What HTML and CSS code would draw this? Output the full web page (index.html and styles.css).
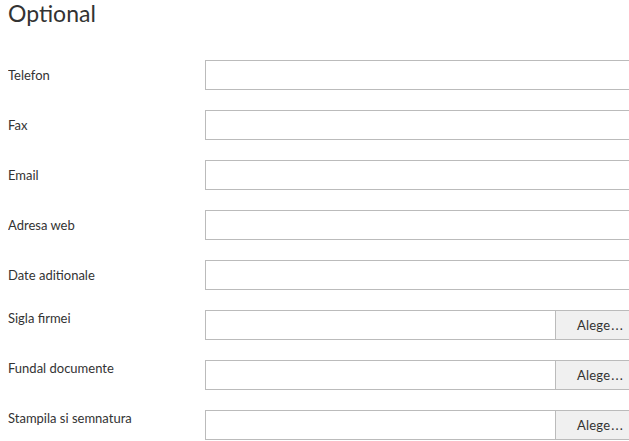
FILE: index.html
```html
<!DOCTYPE html>
<html lang="ro">
<head>
  <meta charset="UTF-8">
  <title>Optional</title>
  <link rel="stylesheet" href="styles.css">
</head>
<body>
  <h2>Optional</h2>
  <div class="form">
    <div class="row">
      <label>Telefon</label>
      <input type="text">
    </div>
    <div class="row">
      <label>Fax</label>
      <input type="text">
    </div>
    <div class="row">
      <label>Email</label>
      <input type="text">
    </div>
    <div class="row">
      <label>Adresa web</label>
      <input type="text">
    </div>
    <div class="row">
      <label>Date aditionale</label>
      <input type="text">
    </div>
    <div class="row file">
      <label>Sigla firmei</label>
      <div class="picker"><input type="text"><button>Alege<span class="dots">...</span></button></div>
    </div>
    <div class="row file">
      <label>Fundal documente</label>
      <div class="picker"><input type="text"><button>Alege<span class="dots">...</span></button></div>
    </div>
    <div class="row file">
      <label>Stampila si semnatura</label>
      <div class="picker"><input type="text"><button>Alege<span class="dots">...</span></button></div>
    </div>
  </div>
</body>
</html>
```

FILE: styles.css
```css
html, body {
  overflow: hidden;
}
body {
  margin: 0;
  padding: 0 0 0 8px;
  font-family: Lato, "Open Sans", sans-serif;
  color: #333;
  background: #fff;
}
h2 {
  margin: 0;
  height: 60px;
  font-size: 23px;
  font-weight: 400;
  line-height: 26px;
}
.row {
  display: flex;
  align-items: center;
  height: 30px;
  margin-bottom: 20px;
  overflow: hidden;
}
label {
  width: 197px;
  flex: none;
  font-size: 13px;
  line-height: 16px;
}
.row.file label {
  align-self: flex-start;
}
input {
  box-sizing: border-box;
  flex: none;
  width: 500px;
  height: 30px;
  margin: 0;
  border: 1px solid #bbb;
  border-radius: 0;
  background: #fff;
  font-family: inherit;
}
.picker {
  display: flex;
  flex: none;
}
.picker input {
  width: 351px;
}
.picker button {
  box-sizing: border-box;
  flex: none;
  height: 30px;
  width: 90px;
  margin: 0 0 0 -1px;
  padding: 0 0 0 21px;
  text-align: left;
  border: 1px solid #bbb;
  border-radius: 0;
  background: #f0f0f0;
  color: #333;
  font-family: inherit;
  font-size: 13px;
  letter-spacing: 0.2px;
}
.dots {
  margin-left: 1px;
  letter-spacing: 1.2px;
}
```
